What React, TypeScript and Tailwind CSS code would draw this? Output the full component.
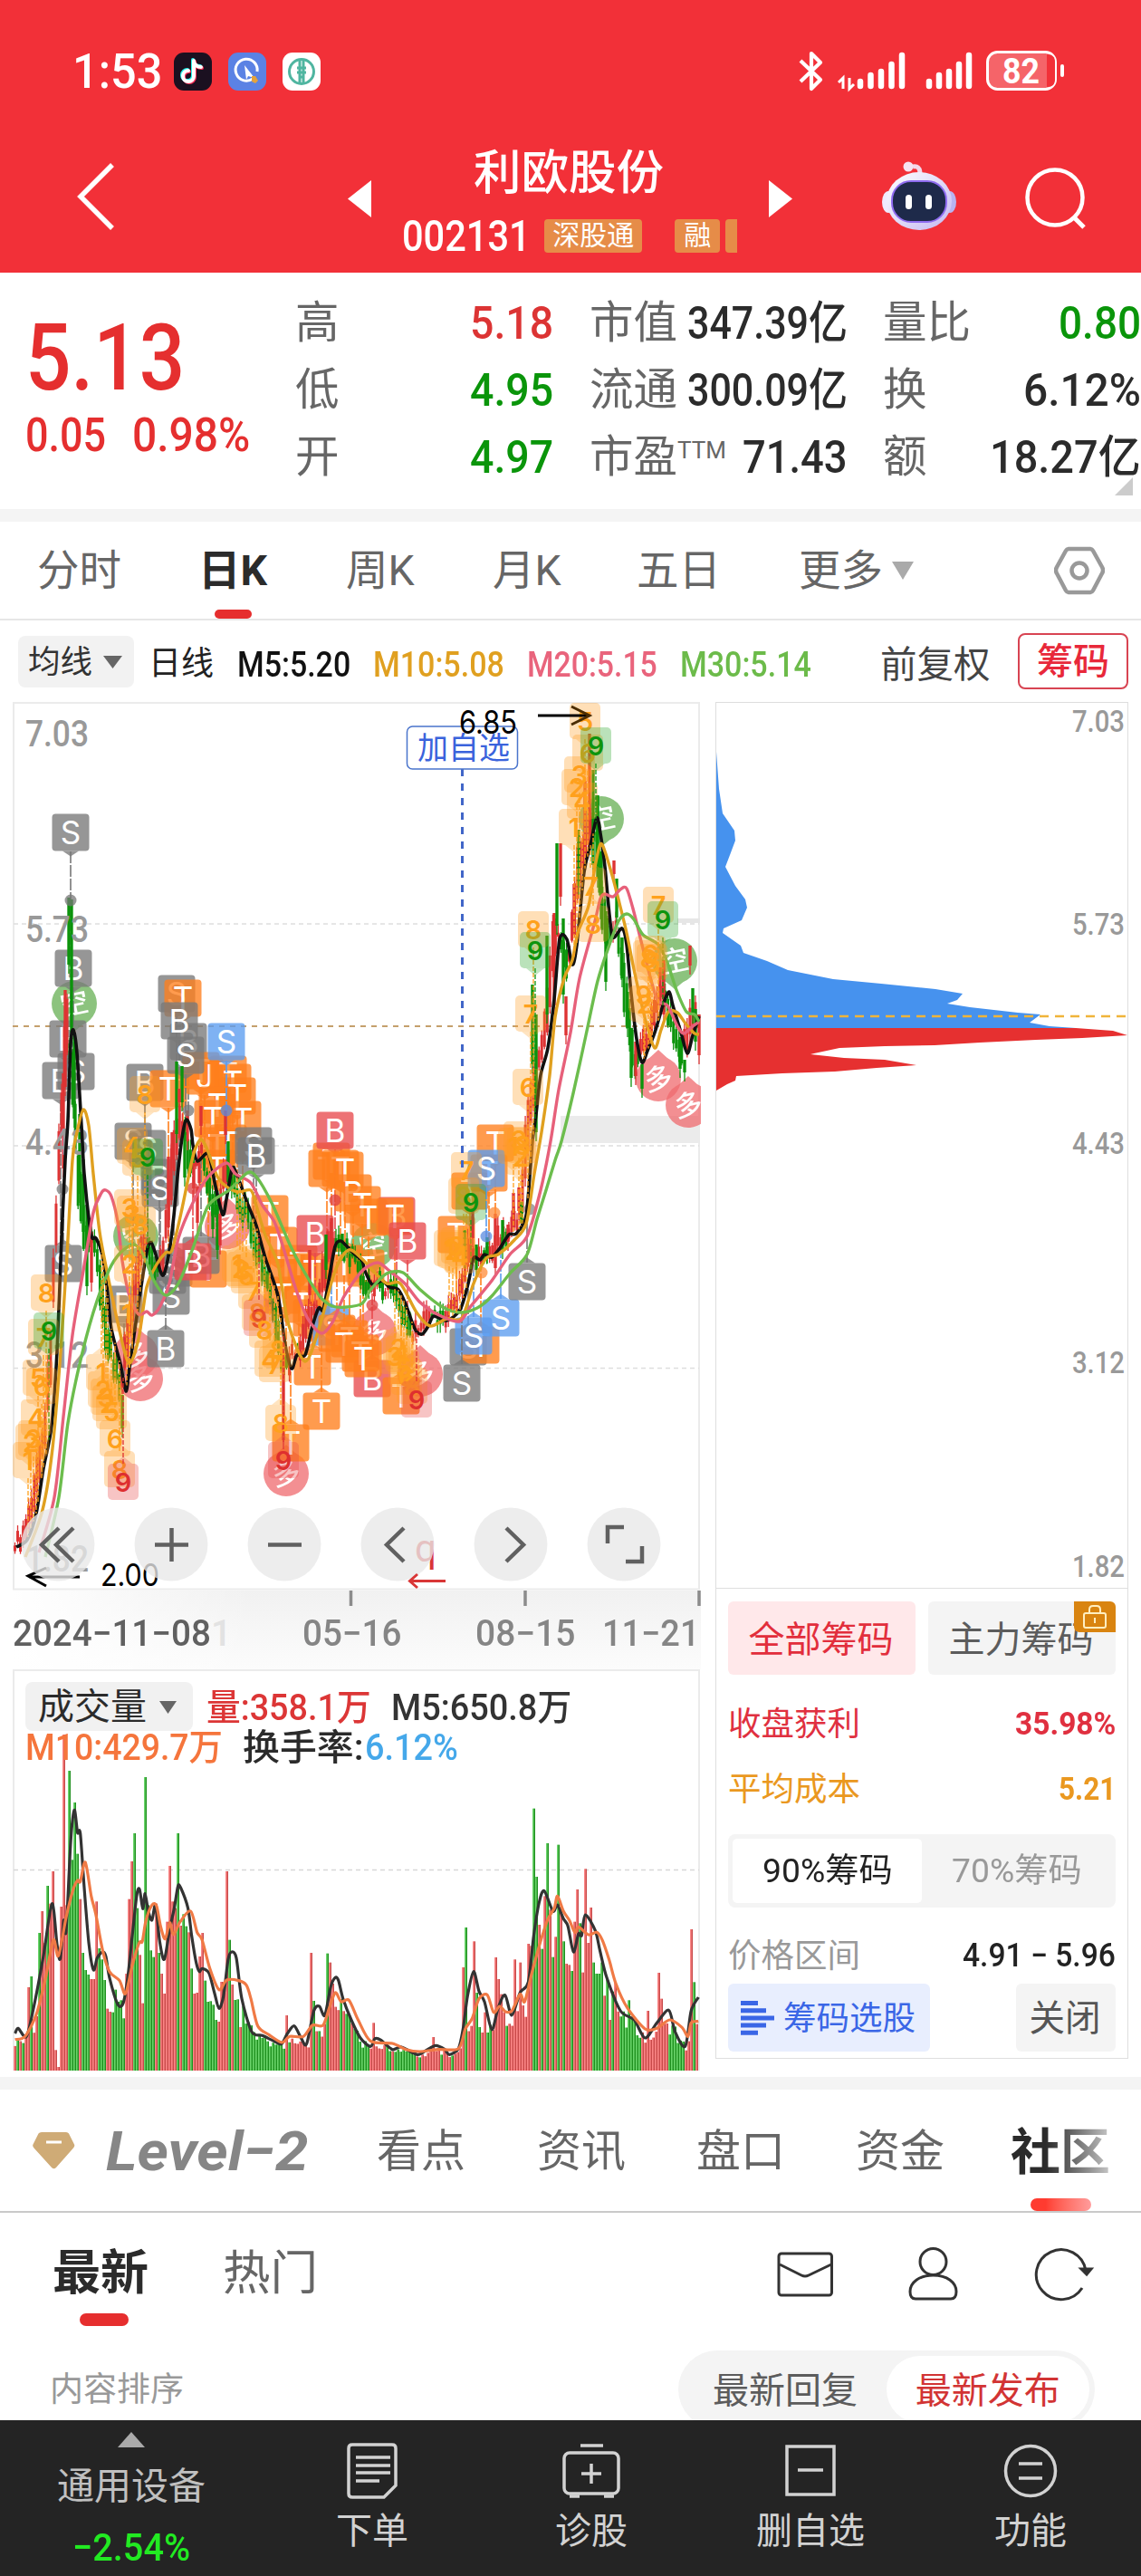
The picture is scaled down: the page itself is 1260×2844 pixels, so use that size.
import { useLayoutEffect, useRef, useState, type ReactNode } from "react";

type Pt = [number, number];
const pts = (s: string): Pt[] => s.trim().split(/\s+/).map((p) => p.split(",").map(Number) as Pt);

/* Text squeezed or stretched horizontally so that it fills its own box width. */
function Fit({ className = "", children }: { className?: string; children: ReactNode }) {
  const box = useRef<HTMLSpanElement>(null);
  const inner = useRef<HTMLSpanElement>(null);
  const [k, setK] = useState(1);
  useLayoutEffect(() => {
    if (box.current && inner.current && inner.current.offsetWidth) setK(box.current.offsetWidth / inner.current.offsetWidth);
  }, []);
  return (
    <span ref={box} className={"inline-block shrink-0 whitespace-nowrap text-left " + className}>
      <span ref={inner} className="inline-block origin-left" style={{ transform: `scaleX(${k})` }}>
        {children}
      </span>
    </span>
  );
}

function StatusBar() {
  return (
    <div className="flex h-[158px] items-center pl-[80px] text-white">
      <Fit className="w-[99px] pt-[2px] text-[53px] font-medium">1:53</Fit>
      <svg className="ml-[13px] h-[42px] w-[42px]" viewBox="0 0 42 42">
        <rect width="42" height="42" rx="11" fill="#1b1020" />
        <g fill="none" strokeWidth="4" strokeLinecap="round">
          <path d="M22 9v17a6 6 0 1 1-6-6M22 10c1 4 4 6 8 6" stroke="#25f4ee" transform="translate(-1,-1)" />
          <path d="M22 9v17a6 6 0 1 1-6-6M22 10c1 4 4 6 8 6" stroke="#fe2c55" transform="translate(1,1)" />
          <path d="M22 9v17a6 6 0 1 1-6-6M22 10c1 4 4 6 8 6" stroke="#fff" />
        </g>
      </svg>
      <svg className="ml-[18px] h-[42px] w-[42px]" viewBox="0 0 42 42">
        <rect width="42" height="42" rx="11" fill="#5b82e4" />
        <path d="M27 29a12 12 0 1 1 5-8" fill="none" stroke="#fff" strokeWidth="3" />
        <path d="M18 14l11 14-7-2-2 4z" fill="#fff" />
        <path d="M26 26l4 0 3 5-3 3-4-2z" fill="#e5a33c" />
      </svg>
      <svg className="ml-[18px] h-[42px] w-[42px]" viewBox="0 0 42 42">
        <rect width="42" height="42" rx="11" fill="#fff" />
        <circle cx="21" cy="21" r="13.5" fill="none" stroke="#4fb5a0" strokeWidth="3" />
        <path d="M19 7v27M23 7v27M16 17h10M16 22h10M18 27h6" stroke="#4fb5a0" strokeWidth="3" fill="none" />
      </svg>
      <svg className="ml-[528px] h-[46px] w-[296px]" viewBox="882 56 296 46">
        <g fill="none" stroke="#fff" strokeWidth="4.2" strokeLinejoin="round">
          <path d="M884 67l22 21-10 10V59l10 10-22 21" />
        </g>
        <g stroke="#fff" strokeLinecap="round" strokeWidth="6.5">
          <path d="M950 90v5M961.500 83v12M973 79v16M984.500 71v24M996 61v34" />
          <path d="M1026 90v5M1037 83v12M1048 79v16M1059 71v24M1070 61v34" />
        </g>
        <path d="M926 91l5-5v12M938 86v12l5-5" fill="none" stroke="#fff" strokeWidth="3" />
        <rect x="1090.500" y="57.500" width="75" height="41" rx="11" fill="#f56469" stroke="#fff" strokeWidth="3" />
        <path d="M1157 60h-1v36h1c5 0 8-3 8-8V68c0-5-3-8-8-8z" fill="#f23038" />
        <rect x="1171" y="71" width="4" height="14" rx="2" fill="#fff" />
        <text x="1107" y="92" fontSize="38" fontWeight="700" fill="#fff" textLength="41" lengthAdjust="spacingAndGlyphs">82</text>
      </svg>
    </div>
  );
}

function NavBar() {
  return (
    <div className="flex h-[143px] text-white">
      <svg className="ml-[84px] mt-[22px] h-[74px] w-[44px]" viewBox="0 0 44 74">
        <path d="M40 2L5 37l35 35" fill="none" stroke="#fff" strokeWidth="5.500" />
      </svg>
      <svg className="ml-[256px] mt-[41px] h-[41px] w-[26px]" viewBox="0 0 26 41"><path d="M26 0v41L0 20.500z" fill="#fff" /></svg>
      <div className="ml-[36px] flex w-[368px] flex-col">
        <div className="h-[63px] pl-[77px] pt-[3px] text-[52.500px] font-medium leading-[60px]">利欧股份</div>
        <div className="mt-[13px] flex h-[52px] items-center">
          <Fit className="-ml-[2px] w-[142px] pt-[2px] text-[48px] font-medium leading-[52px]">002131</Fit>
          <span className="ml-[15px] flex h-[37px] w-[109px] items-center justify-center rounded-[4px] bg-[#e68c48] text-[30px]">深股通</span>
          <span className="ml-[36px] flex h-[37px] w-[50px] items-center justify-center rounded-[4px] bg-[#e68c48] text-[30px]">融</span>
          <span className="ml-[6px] h-[37px] w-[13px] rounded-l-[4px] bg-[#e68c48]" />
        </div>
      </div>
      <svg className="ml-[35px] mt-[41px] h-[41px] w-[26px]" viewBox="0 0 26 41"><path d="M0 0v41l26-20.500z" fill="#fff" /></svg>
      <svg className="ml-[98px] mt-[20px] h-[78px] w-[84px]" viewBox="0 0 84 78">
        <defs>
          <linearGradient id="shell" x1="0" y1="0" x2="1" y2="1"><stop offset="0" stopColor="#fff" /><stop offset="1" stopColor="#c4b9f2" /></linearGradient>
        </defs>
        <path d="M43 14c0-7-3-9-8-8" fill="none" stroke="#f3d9ea" strokeWidth="5" />
        <circle cx="30" cy="6" r="5.500" fill="#f6e3f2" />
        <ellipse cx="8" cy="45" rx="7" ry="12" fill="#efeafe" />
        <ellipse cx="76" cy="45" rx="7" ry="12" fill="#b8b4f0" />
        <ellipse cx="42" cy="44" rx="36" ry="32" fill="url(#shell)" />
        <rect x="12" y="22" width="60" height="45" rx="21" fill="#1e2a4a" stroke="#8f6cf0" strokeWidth="2" />
        <rect x="27" y="37" width="7" height="16" rx="3.500" fill="#fff" />
        <rect x="49" y="37" width="7" height="16" rx="3.500" fill="#fff" />
      </svg>
      <svg className="ml-[74px] mt-[27px] h-[70px] w-[70px]" viewBox="0 0 70 70">
        <circle cx="34" cy="33" r="30.500" fill="none" stroke="#fff" strokeWidth="4.500" />
        <path d="M55 55l11 11" stroke="#fff" strokeWidth="5" />
      </svg>
    </div>
  );
}

function Stat({ label, tone, children }: { label: ReactNode; tone: string; children: ReactNode }) {
  return (
    <div className="flex h-[74px] items-center justify-between pt-[6px]">
      <span className="whitespace-nowrap text-[48.500px] text-[#666]">{label}</span>
      <span className={"text-[50px] font-medium " + tone}>{children}</span>
    </div>
  );
}

function Quote() {
  return (
    <div className="relative flex h-[261px] bg-white pt-[16px]">
      <div className="ml-[28px] w-[298px] text-[#e52f2f]">
        <Fit className="mt-[26px] h-[104px] w-[176px] text-[102px] font-medium leading-[104px]">5.13</Fit>
        <div className="mt-[4px] flex text-[52px] font-medium leading-[60px]">
          <Fit className="w-[89px]">0.05</Fit>
          <Fit className="ml-[29px] w-[130px]">0.98%</Fit>
        </div>
      </div>
      <div className="w-[285px]">
        <Stat label="高" tone="text-[#dc3434]"><Fit className="w-[92px]">5.18</Fit></Stat>
        <Stat label="低" tone="text-[#0a950a]"><Fit className="w-[92px]">4.95</Fit></Stat>
        <Stat label="开" tone="text-[#0a950a]"><Fit className="w-[92px]">4.97</Fit></Stat>
      </div>
      <div className="ml-[40px] w-[285px]">
        <Stat label="市值" tone="text-[#2b2b2b]"><Fit className="w-[177px]">347.39亿</Fit></Stat>
        <Stat label="流通" tone="text-[#2b2b2b]"><Fit className="w-[177px]">300.09亿</Fit></Stat>
        <Stat label={<>市盈<span className="relative -top-[15px] text-[26px]">TTM</span></>} tone="text-[#2b2b2b]"><Fit className="w-[116px]">71.43</Fit></Stat>
      </div>
      <div className="ml-[39px] w-[285px]">
        <Stat label="量比" tone="text-[#0a950a]"><Fit className="w-[91px]">0.80</Fit></Stat>
        <Stat label="换" tone="text-[#2b2b2b]"><Fit className="w-[130px]">6.12%</Fit></Stat>
        <Stat label="额" tone="text-[#2b2b2b]"><Fit className="w-[167px]">18.27亿</Fit></Stat>
      </div>
      <svg className="absolute right-[9px] top-[226px] h-[20px] w-[20px]" viewBox="0 0 20 20"><path d="M20 0v20H0z" fill="#ccc" /></svg>
    </div>
  );
}

const Down = ({ className }: { className: string }) => (
  <svg className={className} viewBox="0 0 20 14" preserveAspectRatio="none"><path d="M0 0h20L10 14z" fill="currentColor" /></svg>
);

function PeriodTabs() {
  return (
    <div className="flex h-[109px] items-center border-b-2 border-[#e6e6e6] pl-[41px] text-[46.500px] text-[#666]">
      <span className="w-[178px] pt-[3px]">分时</span>
      <span className="relative flex h-full w-[163px] items-center pt-[3px] font-bold text-[#2b2b2b]">
        日K
        <span className="absolute bottom-0 left-[18px] h-[10px] w-[41px] rounded-[5px] bg-[#e62e2e]" />
      </span>
      <span className="w-[162px] pt-[3px]">周K</span>
      <span className="w-[159px] pt-[3px]">月K</span>
      <span className="w-[179px] pt-[3px]">五日</span>
      <span className="w-[103px] pt-[3px]">更多</span>
      <Down className="h-[20px] w-[24px] text-[#aaa]" />
      <svg className="ml-[155px] h-[54px] w-[56px]" viewBox="0 0 56 54">
        <path d="M16 3h24a4 4 0 0 1 3 2l10 18a7 7 0 0 1 0 7L43 49a4 4 0 0 1-3 2H16a4 4 0 0 1-3-2L3 30a7 7 0 0 1 0-7L13 5a4 4 0 0 1 3-2z" fill="none" stroke="#999" strokeWidth="4.500" />
        <circle cx="28" cy="27" r="8.500" fill="none" stroke="#999" strokeWidth="4.500" />
      </svg>
    </div>
  );
}

function AverageRow() {
  return (
    <div className="flex h-[90px] items-center pl-[20px] text-[38px]">
      <div className="flex h-[57px] w-[128px] items-center rounded-[8px] bg-[#f2f2f2] pl-[11px] pt-[2px] text-[35.500px] text-[#333]">
        均线<Down className="ml-[12px] h-[14px] w-[21px] text-[#666]" />
      </div>
      <span className="ml-[16px] w-[98px] pt-[8px] text-[36px] text-[#222]">日线</span>
      <div className="flex h-full items-center pt-[9px] font-medium">
        <Fit className="w-[125px] text-[#111]">M5:5.20</Fit>
        <Fit className="ml-[25px] w-[145px] text-[#e0a020]">M10:5.08</Fit>
        <Fit className="ml-[25px] w-[144px] text-[#e9647c]">M20:5.15</Fit>
        <Fit className="ml-[25px] w-[145px] text-[#6cbb4a]">M30:5.14</Fit>
      </div>
      <span className="ml-[76px] w-[123px] pt-[8px] text-[40.500px] text-[#444]">前复权</span>
      <span className="ml-[29px] flex h-[62px] w-[122px] items-center justify-center rounded-[8px] border-2 border-[#d84452] pt-[2px] text-[40px] font-medium text-[#e8283a]">筹码</span>
    </div>
  );
}

const MA5 = pts(`18,1708 30,1700 40,1671 48,1621 57,1574 63,1492 68,1367 72,1281 75,1237 78,1153 81,1137 85,1163 90,1243 93,1296 99,1353 102,1367 106,1367 113,1385 118,1421 123,1467 133,1506 139,1536 143,1510 148,1474 157,1413 163,1378 167,1372 172,1385 177,1403 181,1407 187,1381 192,1342 197,1289 202,1250 206,1236 211,1247 213,1264 218,1282 230,1274 238,1310 246,1341 250,1324 255,1296 258,1289 265,1306 273,1328 283,1353 293,1389 307,1431 315,1485 322,1511 328,1496 337,1496 345,1464 352,1444 357,1446 363,1414 370,1376 376,1370 383,1376 392,1385 400,1392 403,1403 411,1418 422,1414 430,1421 440,1424 448,1440 458,1467 466,1473 473,1464 479,1453 493,1458 508,1446 517,1417 523,1389 530,1391 535,1385 543,1388 552,1378 562,1363 570,1362 580,1346 583,1324 588,1260 592,1230 597,1187 605,1157 612,1103 618,1037 626,1037 632,1065 637,1043 645,963 652,933 659,903 663,920 668,957 673,1010 677,1035 687,1025 692,1043 697,1097 703,1147 709,1173 715,1160 723,1140 733,1107 739,1095 743,1110 752,1140 759,1163 765,1143 772,1122`);
const MA10 = pts(`28,1719 47,1667 58,1599 67,1492 74,1385 80,1281 85,1250 92,1225 98,1243 103,1296 110,1360 118,1403 130,1460 142,1505 153,1478 162,1421 173,1396 183,1383 190,1380 200,1339 212,1281 217,1265 222,1258 228,1267 240,1299 250,1310 263,1316 277,1314 283,1331 293,1364 307,1396 318,1460 337,1503 353,1464 370,1403 385,1380 400,1390 410,1401 427,1417 442,1417 460,1449 475,1464 493,1456 510,1455 523,1417 537,1389 550,1385 568,1369 581,1351 590,1296 598,1250 607,1187 613,1123 623,1080 632,1060 638,1030 650,1000 657,957 663,932 668,940 677,970 683,993 692,1030 700,1070 713,1127 723,1157 730,1137 738,1117 748,1118 757,1130 767,1141 772,1142`);
const MA20 = pts(`43,1714 60,1653 70,1564 80,1474 92,1403 103,1339 112,1317 117,1314 123,1321 130,1349 135,1392 143,1431 153,1451 162,1448 168,1452 177,1442 187,1417 197,1367 213,1328 230,1299 250,1284 260,1296 277,1306 290,1331 303,1349 313,1378 327,1424 340,1456 355,1472 367,1460 380,1431 400,1403 417,1394 430,1403 447,1417 463,1437 483,1451 507,1459 520,1442 543,1414 563,1385 582,1365 597,1314 608,1260 617,1203 630,1140 640,1080 657,1017 663,992 668,987 677,990 685,982 692,981 700,1007 710,1047 725,1102 737,1110 748,1133 755,1141 765,1133 772,1128`);
const MA30 = pts(`50,1719 65,1653 75,1571 87,1510 103,1449 120,1403 133,1383 148,1374 158,1385 170,1414 183,1430 197,1417 213,1378 230,1331 253,1314 273,1295 283,1299 300,1328 320,1374 333,1399 353,1431 367,1442 383,1443 400,1439 410,1423 427,1406 445,1405 463,1423 487,1442 507,1449 527,1444 543,1431 563,1406 582,1385 593,1346 603,1314 613,1281 620,1260 633,1207 647,1143 660,1083 673,1043 683,1017 692,1009 700,1015 710,1032 727,1043 737,1063 747,1093 758,1117 767,1120 772,1128`);

function at(line: Pt[], x: number) {
  if (x <= line[0][0]) return line[0][1];
  for (let i = 1; i < line.length; i++) {
    const [x0, y0] = line[i - 1];
    const [x1, y1] = line[i];
    if (x <= x1) return y0 + ((y1 - y0) * (x - x0)) / (x1 - x0 || 1);
  }
  return line[line.length - 1][1];
}
const rnd = (i: number, k: number) => {
  const v = Math.sin(i * 127.1 + k * 311.7) * 43758.5453;
  return v - Math.floor(v);
};
/* Smooth curve through the points (Catmull-Rom converted to Bezier). */
function curve(p: Pt[]) {
  let d = `M${p[0][0]} ${p[0][1]}`;
  for (let i = 0; i < p.length - 1; i++) {
    const a = p[i - 1] ?? p[i], b = p[i], c = p[i + 1], e = p[i + 2] ?? c;
    d += `C${b[0] + (c[0] - a[0]) / 7} ${b[1] + (c[1] - a[1]) / 7} ${c[0] - (e[0] - b[0]) / 7} ${c[1] - (e[1] - b[1]) / 7} ${c[0]} ${c[1]}`;
  }
  return d;
}

const RED = "#de3434";
const GREEN = "#0c940c";
const candles = Array.from({ length: 250 }, (_, i) => {
  const x = 16.5 + i * 3.03;
  const now = at(MA5, x + 7), prev = at(MA5, x + 2);
  const slope = now - prev;
  const mid = now + (rnd(i, 1) - 0.5) * 16;
  const half = 3 + rnd(i, 2) * 7 + Math.min(Math.abs(slope) * 0.45, 22);
  const up = slope + (rnd(i, 3) - 0.5) * 10 < 0;
  const wick = rnd(i, 4) * 9;
  return { x, top: mid - half, bottom: mid + half, hi: mid - half - wick, lo: mid + half + wick * rnd(i, 5), color: up ? RED : GREEN };
});
/* Sessions whose range is far outside of the average: x, top, bottom, colour. */
const bars: [number, number, number, string][] = [
  [76, 991, 1065, GREEN], [79, 993, 1140, GREEN], [72, 1093, 1200, RED], [82, 1140, 1235, GREEN], [70, 1185, 1290, RED], [88, 1230, 1318, GREEN], [92, 1280, 1360, GREEN], [96, 1330, 1420, GREEN], [101, 1360, 1416, RED],
  [195, 1172, 1252, GREEN], [201, 1177, 1217, GREEN], [198, 1202, 1217, RED], [207, 1226, 1260, RED], [222, 1221, 1243, RED], [249, 1226, 1253, RED], [204, 1250, 1300, GREEN], [186, 1277, 1355, RED], [190, 1250, 1280, RED], [214, 1284, 1312, RED], [220, 1285, 1306, RED], [218, 1310, 1350, RED], [235, 1330, 1357, GREEN], [240, 1330, 1380, GREEN], [243, 1340, 1375, RED], [252, 1260, 1305, GREEN], [135, 1540, 1577, GREEN],
  [313, 1500, 1590, RED], [342, 1380, 1430, RED], [366, 1345, 1405, RED], [360, 1363, 1402, GREEN], [378, 1362, 1382, GREEN],
  [513, 1358, 1390, GREEN], [522, 1336, 1367, RED], [526, 1374, 1402, GREEN], [538, 1366, 1385, GREEN], [547, 1340, 1400, RED], [555, 1347, 1380, GREEN], [561, 1352, 1371, RED], [567, 1317, 1345, RED], [573, 1311, 1337, RED], [576, 1327, 1350, GREEN],
  [588, 1087, 1175, GREEN], [592, 1120, 1250, GREEN], [604, 1033, 1120, GREEN], [612, 1008, 1110, RED], [615, 931, 1022, GREEN], [619, 931, 990, RED], [622, 1014, 1098, GREEN], [625, 1100, 1143, RED],
  [639, 916, 978, GREEN], [634, 976, 1020, RED], [646, 862, 940, RED], [651, 810, 920, RED], [655, 850, 955, GREEN], [660, 878, 970, GREEN], [664, 940, 1015, GREEN], [669, 1006, 1084, GREEN], [678, 950, 965, RED], [681, 970, 1013, GREEN],
  [687, 1035, 1080, GREEN], [693, 1095, 1135, GREEN], [697, 1135, 1190, GREEN], [702, 1150, 1188, RED], [709, 1175, 1202, GREEN], [733, 1060, 1120, RED], [729, 1068, 1110, RED], [751, 1145, 1180, GREEN], [756, 1170, 1184, GREEN], [762, 1044, 1066, RED], [765, 1091, 1120, GREEN], [768, 1114, 1150, GREEN], [772, 1120, 1165, RED],
];

type Mark = [string, number, number, string];
const marks = (s: string): Mark[] => s.trim().split(/\s+/).map((m) => { const [t, x, y, c] = m.split(","); return [t, +x, +y, c]; });
/* letter, centre x, centre y, colour key (g grey, o orange, r red, b blue) */
const flags = marks(`S,78,919,g B,81,1069,g B,75,1147,g B,67,1193,g S,84,1183,g S,195,1097,g T,202,1102,o B,208,1150,g B,198,1127,g
B,160,1195,g T,186,1202,o T,222,1182,o J,226,1188,o T,252,1186,o T,257,1195,o T,262,1210,o T,268,1236,o T,240,1220,o T,235,1235,o T,240,1265,o T,252,1262,o T,240,1290,o
S,205,1165,g S,250,1150,b S,147,1260,g S,163,1268,g B,176,1300,g S,177,1312,g S,280,1265,g B,283,1276,g S,70,1395,g B,137,1440,g
S,192,1400,g S,185,1408,g S,189,1431,g B,183,1489,g T,230,1401,o B,222,1386,g B,213,1393,r
T,298,1340,o T,308,1375,o T,316,1400,o T,312,1430,o T,330,1395,o T,334,1440,o T,345,1404,o T,344,1455,o T,361,1290,o T,366,1282,o B,370,1248,r T,376,1290,o T,381,1292,o B,390,1317,o B,348,1362,r T,345,1509,o T,355,1558,o T,321,1593,o
S,366,1465,b T,372,1472,o T,386,1478,o T,380,1484,o T,380,1395,o T,400,1330,o T,407,1344,o T,404,1400,o B,438,1342,r T,436,1343,o B,450,1370,r B,411,1522,r T,398,1494,o T,401,1500,o T,443,1541,o
T,519,1315,o T,504,1363,o T,547,1262,o T,540,1295,o S,537,1290,b S,517,1487,g T,531,1485,o S,523,1475,b S,553,1455,b S,510,1527,g S,582,1415,g`);
/* digit badges (o orange count, g green nine, r red nine) */
const counts = marks(`8,51,1427,o 7,48,1476,o 9,54,1469,g 5,42,1521,o 6,46,1530,o 4,40,1565,o 3,37,1588,o 2,34,1592,o 1,31,1612,o
8,160,1208,o 4,146,1265,o 5,152,1278,o 9,163,1277,g 3,143,1333,o 3,146,1340,o 8,155,1352,o 2,143,1395,o 1,140,1450,o
1,112,1515,o 2,114,1534,o 3,117,1542,o 2,119,1549,o 5,123,1558,o 6,127,1588,o 8,132,1622,o 9,136,1636,r
1,262,1395,o 2,265,1400,o 3,268,1402,o 5,272,1408,o 7,280,1425,o 8,284,1449,o 9,286,1455,r 8,292,1468,o 4,298,1500,o 7,303,1506,o 8,307,1490,o 8,310,1571,o 9,313,1612,r
2,440,1488,o 3,436,1497,o 4,443,1495,o 5,446,1510,o 6,449,1520,o 8,455,1530,o 9,460,1545,r
7,515,1292,o 8,512,1320,o 9,520,1327,g 1,496,1378,o 2,500,1380,o 3,504,1375,o 4,508,1386,o
1,567,1265,o 3,573,1258,o 8,577,1264,o 2,575,1277,o 6,583,1200,o 7,586,1119,o 8,589,1026,o 9,591,1049,g
1,634,913,o 4,643,884,o 2,637,869,o 3,640,855,o 6,649,831,o 5,646,796,o 9,658,823,g 7,652,978,o 8,655,1020,o
7,727,999,o 9,732,1015,g 6,718,1053,o 8,716,1058,o 5,720,1062,o 9,711,1098,o 2,712,1108,o`);
const rounds = marks(`空,82,1108,g 空,150,1365,g 空,412,1375,g 空,664,904,g 空,745,1061,g 多,155,1522,p 多,150,1496,p 多,251,1354,p 多,316,1627,p 多,413,1472,p 多,464,1517,p 多,727,1191,p 多,760,1220,p`);
const flagFill: Record<string, string> = { g: "#787878", o: "#ff7f1c", r: "#e84a4e", b: "#5b9cef" };
const countFill: Record<string, [string, string]> = { o: ["#ff9d1e", "#ffa11c"], g: ["#28a428", "#0d940d"], r: ["#e64848", "#de2f2f"] };

function Badge({ t, x, y, c }: { t: string; x: number; y: number; c: string }) {
  const up = y < at(MA5, x);
  return (
    <g>
      <path d={`M${x} ${up ? y + 21 : y - 21}V${at(MA5, x)}`} stroke={c} strokeWidth="2" strokeDasharray="13 2" opacity=".8" />
      <rect x={x - 20.5} y={y - 20.5} width="41" height="41" rx="4" fill={c} opacity=".78" />
      <path d={up ? `M${x - 9} ${y + 20.5}h18l-9 6z` : `M${x - 9} ${y - 20.5}h18l-9-6z`} fill={c} opacity=".78" />
      <text x={x} y={y + 12.5} fontSize="35" fill="#fff" textAnchor="middle">{t}</text>
    </g>
  );
}

function AxisLabel({ x, y, w, size, children }: { x: number; y: number; w: number; size: number; children: string }) {
  return <text x={x} y={y} fontSize={size} fontWeight="500" fill="#999" textLength={w} lengthAdjust="spacingAndGlyphs">{children}</text>;
}

function PriceChart() {
  return (
    <svg className="block h-[981px] w-[760px]" viewBox="14 775 760 981">
      <rect x="15" y="776" width="757" height="978.500" fill="#fff" stroke="#ebebeb" strokeWidth="2" />
      <rect x="619" y="1232" width="154" height="30" fill="#ebebeb" />
      <rect x="748" y="1014" width="25" height="5" fill="#e6e6e6" />
      <path d="M15 1020H772M15 1265H772M15 1510.500H772" stroke="#dedede" strokeWidth="1.500" strokeDasharray="5 4" />
      <path d="M14 1133H772" stroke="#c4a06c" strokeWidth="2" strokeDasharray="6 6" />
      <g fontFamily='"Noto Sans CJK SC"' fontWeight="500">
        {rounds.map(([t, x, y, c], i) => (
          <g key={i} opacity=".75">
            <circle cx={x} cy={y} r="25" fill={c === "g" ? "#66b054" : "#f06a6e"} />
            <path d={c === "g" ? `M${x - 12} ${y + 21}l12 10 12-10z` : `M${x - 12} ${y - 21}l12-11 12 11z`} fill={c === "g" ? "#66b054" : "#f06a6e"} />
            <text x={x} y={y + 11} fontSize="31" fill="#fff" textAnchor="middle" transform={`rotate(-12 ${x} ${y})`}>{t}</text>
          </g>
        ))}
      </g>
      <g fontFamily="Inter">{flags.map(([t, x, y, c], i) => <Badge key={i} t={t} x={x} y={y} c={flagFill[c]} />)}</g>
      <g>
        {candles.map((c, i) => (
          <g key={i} stroke={c.color}>
            <path d={`M${c.x} ${c.hi}V${c.lo}`} strokeWidth="1.300" />
            <path d={`M${c.x} ${c.top + 2}V${c.bottom - 2}`} strokeWidth="3" />
          </g>
        ))}
        {bars.map(([x, a, b, c], i) => (
          <g key={i} stroke={c}>
            <path d={`M${x} ${a}V${b}`} strokeWidth="3.400" />
            <path d={`M${x} ${a}V${b + 10}`} strokeWidth="1.300" />
          </g>
        ))}
      </g>
      <AxisLabel x={28} y={824} w={70} size={40}>7.03</AxisLabel>
      <AxisLabel x={28} y={1040} w={70} size={40}>5.73</AxisLabel>
      <AxisLabel x={28} y={1275} w={70} size={40}>4.43</AxisLabel>
      <AxisLabel x={28} y={1510} w={70} size={40}>3.12</AxisLabel>
      <AxisLabel x={28} y={1735} w={70} size={40}>1.82</AxisLabel>
      <g opacity=".75">
        <circle cx="78" cy="994" r="6.500" fill="#777" /><circle cx="69" cy="1313" r="6.500" fill="#777" /><circle cx="208" cy="1226" r="6.500" fill="#777" />
        <circle cx="250" cy="1226" r="6.500" fill="#5b8ce0" /><circle cx="537" cy="1365" r="6.500" fill="#5b8ce0" /><circle cx="370" cy="1325" r="6.500" fill="#e04040" /><circle cx="213" cy="1312" r="6.500" fill="#e04040" />
        <circle cx="411" cy="1441" r="6.500" fill="#e04040" /><circle cx="546" cy="1339" r="6.500" fill="#ff8c38" /><circle cx="532" cy="1405" r="6.500" fill="#ff8c38" /><circle cx="585" cy="1335" r="6.500" fill="#888" />
      </g>
      <g fill="none" strokeWidth="3.400" strokeLinejoin="round">
        <path d={curve(MA5)} stroke="#111" strokeWidth="3.600" />
        <path d={curve(MA10)} stroke="#e0a01f" />
        <path d={curve(MA20)} stroke="#e7607a" />
        <path d={curve(MA30)} stroke="#6cbd4d" />
      </g>
      <g fontFamily="Inter" fontWeight="600">
        {counts.map(([t, x, y, c], i) => {
          const [fill, ink] = countFill[c];
          const up = y < at(MA5, x);
          return (
            <g key={i}>
              <path d={`M${x} ${up ? y + 20 : y - 20}V${at(MA5, x)}`} stroke={ink} strokeDasharray="5 2" strokeWidth="1.300" />
              <path d={up ? `M${x - 10} ${y + 20}h20l-10 8z` : `M${x - 10} ${y - 20}h20l-10-8z`} fill={fill} opacity=".28" />
              <rect x={x - 17} y={y - 20} width="34" height="40" rx="5" fill={fill} opacity=".32" />
              <text x={x} y={y + 11} fontSize="29" fill={ink} textAnchor="middle">{t}</text>
            </g>
          );
        })}
      </g>
      <path d="M510.500 849V1290" stroke="#4166c8" strokeWidth="3" strokeDasharray="8 8" />
      <rect x="449.500" y="802" width="122" height="47" rx="6" fill="none" stroke="#4a74cc" strokeWidth="1.500" />
      <text x="461" y="838" fontSize="34" fill="#3a63dc">加自选</text>
      <text x="507" y="810" fontSize="35" fontFamily="Inter" fill="#000" textLength="64" lengthAdjust="spacingAndGlyphs">6.85</text>
      <path d="M594 790H650" stroke="#000" strokeWidth="3" /><path d="M631 780l20 10-20 10" stroke="#4a2c00" strokeWidth="3" fill="none" />
      <text x="111" y="1751" fontSize="34" fontFamily="Inter" fill="#000" textLength="65" lengthAdjust="spacingAndGlyphs">2.00</text>
      <path d="M88 1741H32M51 1731l-20 9 20 11" stroke="#000" strokeWidth="3" fill="none" />
      <text x="458" y="1724" fontSize="42" fill="#d93636">q</text>
      <g fill="#e9e9e9" opacity=".78">
        {[64, 189, 314, 439, 564, 689].map((x) => <circle key={x} cx={x} cy="1705" r="40.500" />)}
      </g>
      <g fill="none" stroke="#606060" strokeWidth="4.500">
        <path d="M65 1687l-19 18.500 19 18.500M81 1687l-19 18.500 19 18.500" />
        <path d="M171 1705.500h37M189.500 1687v37M296 1705.500h37" />
        <path d="M446 1687l-19 18.500 19 18.500M559 1687l19 18.500-19 18.500" />
        <path d="M671 1704v-18h18M691 1724h18v-17" />
      </g>
      <path d="M492 1745.500H453M461 1738l-8.500 7.500 8.500 7.500" stroke="#d93636" strokeWidth="3" fill="none" />
    </svg>
  );
}

function Dates() {
  return (
    <div className="relative h-[87px] bg-linear-to-b from-[#f1f1f1] to-[#fcfcfc]">
      <div className="absolute inset-0 bg-linear-to-r from-white to-transparent to-35%" />
      <svg className="absolute inset-x-0 top-0 h-[17px] w-[760px]" viewBox="14 0 760 17"><path d="M387.500 0v17M580 0v17M772 0v17" stroke="#8c8c8c" strokeWidth="3.500" /></svg>
      <div className="relative flex h-full items-center pt-[8px] text-[40px] font-medium text-[#858585]">
        <Fit className="w-[219px] text-[#606060]">2024−11−08</Fit>
        <span className="w-[101px] text-[#e2e2e2]">1</span>
        <Fit className="w-[109px]">05−16</Fit>
        <Fit className="ml-[82px] w-[110px]">08−15</Fit>
        <Fit className="ml-[30px] w-[107px]">11−21</Fit>
      </div>
    </div>
  );
}

const vx = (p: Pt): Pt => [p[0] / 1.985, 1820 + p[1] / 3];
const V5 = pts(`33,1275 40,1258 58,1285 75,1180 95,1020 114,845 125,980 132,1028 140,900 145,935 155,640 163,535 170,610 176,612 185,800 195,980 205,1065 213,1025 225,1005 232,1020 240,1090 258,1178 270,1175 280,1090 290,950 300,815 306,798 313,862 318,812 325,870 333,900 341,850 350,970 360,1030 372,930 382,860 390,788 396,792 412,860 420,950 430,1040 437,1070 443,1060 458,1075 470,1140 480,1192 490,1150 500,1030 508,1005 518,1025 530,1160 552,1270 575,1282 600,1300 617,1310 630,1275 645,1250 660,1290 672,1310 688,1200 700,1185 712,1215 725,1120 735,1090 742,1100 752,1160 770,1230 790,1290 812,1318 822,1292 835,1297 860,1328 880,1320 915,1345 935,1330 955,1315 975,1328 985,1345 1005,1325 1015,1260 1025,1150 1038,1070 1050,1135 1062,1170 1078,1262 1092,1190 1107,1148 1122,1215 1140,1140 1158,1105 1170,950 1182,840 1193,803 1212,870 1222,850 1235,895 1245,920 1257,1005 1268,945 1275,950 1283,882 1305,935 1315,1000 1330,1090 1360,1200 1390,1230 1414,1290 1440,1240 1466,1198 1480,1270 1502,1318 1515,1200 1531,1155`).map(vx);
const V10 = pts(`33,1295 55,1285 80,1210 100,1090 117,965 128,1018 145,890 160,800 170,768 176,772 187,708 200,820 210,880 225,1000 240,1070 262,1100 275,1143 290,1050 305,975 312,970 320,900 333,850 343,852 352,920 362,962 372,908 380,948 395,905 418,870 432,940 443,965 460,1060 480,1130 497,1098 523,1100 540,1115 550,1160 565,1250 590,1280 618,1305 635,1285 665,1285 685,1248 708,1248 722,1190 735,1140 748,1170 765,1165 785,1230 812,1300 860,1308 890,1328 920,1335 960,1328 1005,1325 1020,1260 1035,1225 1050,1160 1068,1147 1082,1205 1095,1185 1108,1203 1122,1200 1140,1145 1150,1170 1165,1080 1182,985 1200,900 1215,860 1222,820 1235,870 1248,900 1260,940 1268,922 1290,948 1308,940 1320,965 1335,1030 1350,1110 1375,1190 1414,1260 1440,1258 1468,1230 1495,1255 1508,1285 1515,1240 1531,1235`).map(vx);
const peaks = marks(`r,61,1122,r g,66,1086,g g,84,942,g r,90,870,r r,96,975,r g,102,786,g r,108,845,r r,114,738,r r,120,1330,r r,126,1386,r r,132,855,r r,138,285,r r,144,850,r g,150,405,g g,156,700,g g,162,510,g g,168,680,g r,174,830,r g,180,1008,g g,186,1065,g g,192,1080,g r,198,1095,r r,203,1095,r r,208,838,r g,215,993,g g,220,1030,g g,226,1098,g r,232,1193,r r,238,1203,r g,244,1205,g g,250,1130,g g,256,1170,g g,262,1165,g g,268,1225,g r,275,1077,r r,281,830,r r,287,705,r g,293,612,g g,299,860,g r,305,1015,r r,311,1175,r g,317,426,g g,323,850,g g,329,1000,g g,335,1022,g r,341,845,r g,347,1008,g r,352,1077,r r,358,1143,r r,364,905,r r,370,720,r r,376,838,r r,382,860,r g,388,612,g r,394,918,r g,400,880,g g,406,920,g r,412,940,r g,418,1060,g r,424,1143,r r,430,1140,r r,436,1020,r r,442,942,r g,448,1100,g g,454,1170,g g,460,1168,g g,466,1180,g g,472,1230,g r,478,1236,r r,484,1104,r r,490,1104,r r,495,738,r g,501,965,g r,508,1113,r g,514,1164,g g,520,1162,g r,526,1254,r r,626,1215,r r,680,1008,r g,686,1167,g g,716,1010,g r,722,1040,r r,728,1110,r r,818,1240,r r,948,1287,r r,1013,1056,r g,1019,924,g r,1037,970,r g,1043,1140,g g,1049,1254,g r,1055,1272,r r,1061,1205,r g,1067,1272,g r,1085,1023,r r,1091,1095,r r,1097,1145,r r,1126,1030,r r,1138,1040,r r,1150,1220,r r,1156,978,r r,1162,985,r g,1168,530,g g,1174,756,g r,1180,915,r g,1186,995,g r,1192,820,r g,1198,645,g r,1204,865,r g,1210,1022,g r,1216,955,r g,1222,650,g r,1228,860,r g,1234,970,g r,1240,1044,r r,1246,1048,r g,1251,1068,g r,1257,905,r r,1263,798,r g,1269,910,g r,1275,1073,r r,1281,730,r r,1287,975,r r,1293,858,r g,1299,1040,g g,1305,1077,g g,1311,1077,g g,1317,1040,g r,1323,1150,r g,1329,1095,g r,1335,1230,r r,1345,1105,r g,1376,1165,g r,1418,1200,r r,1442,1074,r r,1448,1160,r r,1513,930,r g,1519,1105,g`);
const volumes = Array.from({ length: 252 }, (_, i) => {
  const x = 15 + i * 3;
  const h = (2286 - Math.max(at(V5, x), at(V10, x))) * (0.72 + rnd(i, 7) * 0.3);
  const slope = at(MA5, x + 6) - at(MA5, x);
  let top = 2286 - h;
  let red = slope + (rnd(i, 8) - 0.5) * 22 < 0;
  for (const [t, px, py] of peaks) {
    if (Math.abs(px / 1.985 - 1 - x) <= 1.5) { top = 1820 + py / 3; red = t === "r"; }
  }
  return { x, top, red };
});

function VolumePanel() {
  return (
    <div className="relative h-[444px]">
      <svg className="absolute inset-0 h-[444px] w-[760px]" viewBox="14 1843 760 444">
        <path d="M15 2286V1844H772V2286" fill="none" stroke="#ebebeb" strokeWidth="2" />
        <path d="M15 2064.500H772" stroke="#d8d8d8" strokeWidth="1.500" strokeDasharray="5 4" />
        {volumes.map((v) => (
          <g key={v.x}>
            <rect x={v.x} y={v.top} width="2" height={2286 - v.top} fill={v.red ? "#fb8686" : "#6ad46a"} />
            <rect x={v.x + 1.6} y={v.top} width="1.400" height={2286 - v.top} fill={v.red ? "#c84a4a" : "#1f901f"} />
          </g>
        ))}
        <g fill="none" strokeWidth="3.200" strokeLinejoin="round">
          <path d={curve(V5)} stroke="#333" />
          <path d={curve(V10)} stroke="#f07a45" />
        </g>
      </svg>
      <div className="relative flex h-[54px] translate-y-[14px] items-center pl-[14px] text-[40px]">
        <div className="flex h-[54px] w-[185px] items-center rounded-[8px] bg-[#f1f1f1] pl-[14px] pt-[2px] text-[#2b2b2b]">
          <span className="w-[121px]">成交量</span><Down className="ml-[13px] h-[14px] w-[19px] text-[#666]" />
        </div>
        <Fit className="ml-[15px] w-[182px] pt-[3px] font-medium text-[#dc3636]">量:358.1万</Fit>
        <Fit className="ml-[22px] w-[199px] pt-[3px] font-medium text-[#333]">M5:650.8万</Fit>
      </div>
      <div className="relative flex h-[40px] translate-y-[13px] items-center pl-[14px] text-[40px] font-medium">
        <Fit className="w-[218px] text-[#f5753c]">M10:429.7万</Fit>
        <Fit className="ml-[22px] w-[134px] text-[#2b2b2b]">换手率:</Fit>
        <Fit className="ml-px w-[103px] text-[#45a8ea]">6.12%</Fit>
      </div>
    </div>
  );
}

function ChipChart() {
  return (
    <svg className="block h-[977px] w-[454px]" viewBox="791 777 454 977">
      <path d="M791 831L794 872 798 899 811 918 812 929 806 945 801 958 812 979 823 994 825 1003 819 1017 799 1026 798 1031 818 1045 821 1053 847 1062 870 1072 920 1082 973 1087 1033 1093 1063 1098 1057 1105 1046 1109 1071 1113 1124 1119 1149 1121 1137 1130 1159 1134 1188 1136H791z" fill="#4692ee" />
      <path d="M791 1136H1188L1229 1139 1245 1144 1195 1147 1144 1149 1082 1152 1032 1155 977 1156 927 1158 899 1164 895 1165 932 1169 977 1171 1012 1177 968 1180 922 1184 864 1186 813 1189 812 1194 803 1198 791 1205z" fill="#e63030" />
      <path d="M791 1123H1245" stroke="#f0b43a" strokeWidth="2.500" strokeDasharray="10 7" />
      <AxisLabel x={1184} y={809} w={58} size={33}>7.03</AxisLabel>
      <AxisLabel x={1184} y={1033} w={58} size={33}>5.73</AxisLabel>
      <AxisLabel x={1184} y={1275} w={58} size={33}>4.43</AxisLabel>
      <AxisLabel x={1184} y={1517} w={58} size={33}>3.12</AxisLabel>
      <AxisLabel x={1184} y={1742} w={58} size={33}>1.82</AxisLabel>
    </svg>
  );
}

function ChipPanel() {
  return (
    <div className="ml-[16px] h-[1498px] w-[456px] border border-[#dedede]">
      <ChipChart />
      <div className="border-t border-[#dedede] px-[13px] pt-[14px]">
        <div className="flex justify-between text-[40px]">
          <span className="flex h-[81px] w-[207px] items-center justify-center rounded-[6px] bg-[#ffe8ea] pt-[4px] pr-[2px] text-[#e22e3c]">全部筹码</span>
          <span className="relative flex h-[81px] w-[207px] items-center justify-center rounded-[6px] bg-[#f4f4f4] pt-[4px] pr-[2px] text-[#5c5c5c]">
            主力筹码
            <span className="absolute right-0 top-0 flex h-[34px] w-[46px] items-center justify-center rounded-tr-[6px] rounded-bl-[6px] bg-[#d98410]">
              <svg className="h-[26px] w-[26px]" viewBox="0 0 26 26" fill="none" stroke="#ffeec0" strokeWidth="2"><rect x="1" y="9" width="24" height="16" rx="2" /><path d="M7 9V5c0-3 2-4 4-4h4c2 0 4 1 4 4v4M13 14v6" /></svg>
            </span>
          </span>
        </div>
        <div className="mt-[19px] flex h-[72px] items-center justify-between text-[36.500px] text-[#e03040]"><span>收盘获利</span><Fit className="w-[111px] text-[35px] font-bold">35.98%</Fit></div>
        <div className="flex h-[72px] items-center justify-between text-[36.500px] text-[#ea9820]"><span>平均成本</span><Fit className="w-[63px] text-[35px] font-bold">5.21</Fit></div>
        <div className="mt-[13px] flex h-[81px] rounded-[8px] bg-[#f4f4f4] p-[5px] text-[37px]">
          <span className="flex w-[209px] items-center justify-center rounded-[5px] bg-white pt-[2px] text-[#222]"><Fit className="w-[144px]">90%筹码</Fit></span>
          <span className="flex w-[209px] items-center justify-center pt-[2px] text-[#999]"><Fit className="w-[144px]">70%筹码</Fit></span>
        </div>
        <div className="mt-[24px] flex h-[60px] items-center justify-between text-[36.500px] text-[#999]"><span>价格区间</span><Fit className="w-[169px] text-[36px] font-medium text-[#222]">4.91 − 5.96</Fit></div>
        <div className="flex justify-between">
          <span className="flex h-[75px] w-[223px] items-center rounded-[6px] bg-[#e8eefe] pl-[14px] pt-[2px] text-[36.500px] text-[#3a66e6]">
            <svg className="-mt-[2px] mr-[10px] h-[38px] w-[37px]" viewBox="0 0 37 38" stroke="#3a66e6" strokeWidth="5"><path d="M0 2.500h19M0 10.700h28M0 19h37M0 27h28M0 35.300h19" /></svg>
            筹码选股
          </span>
          <span className="flex h-[75px] w-[110px] items-center justify-center rounded-[6px] bg-[#f4f4f4] pr-[2px] pt-[2px] text-[39.500px] text-[#555]">关闭</span>
        </div>
      </div>
    </div>
  );
}

function SectionTabs() {
  return (
    <div className="flex h-[136px] items-center border-b-2 border-[#c9c9c9] text-[49px] text-[#666]">
      <svg className="ml-[36px] h-[44px] w-[47px]" viewBox="0 0 47 44">
        <path d="M10 2h27q2 0 3 1.500l6 12q1 2-1 4L26 41q-2.500 2.500-5 0L1.500 19.500q-2-2-1-4l6-12Q7.500 2 10 2z" fill="#cfab76" />
        <path d="M15 13h17" stroke="#fff" strokeWidth="3" />
      </svg>
      <Fit className="ml-[34px] w-[224px] pt-[3px] text-[61px] font-bold italic text-[#868686]">Level−2</Fit>
      <span className="ml-[75px] w-[177px] pt-[5px]">看点</span>
      <span className="w-[176px] pt-[5px]">资讯</span>
      <span className="w-[176px] pt-[5px]">盘口</span>
      <span className="w-[171px] pt-[5px]">资金</span>
      <span className="relative flex h-full w-[112px] items-center pt-[4px]">
        <span className="bg-linear-to-r from-[#2b2b2b] from-35% to-[#c8c8c8] bg-clip-text text-[55px] font-bold text-transparent">社区</span>
        <span className="absolute bottom-0 left-[22px] h-[14px] w-[67px] rounded-[7px] bg-linear-to-r from-[#ff3b30] from-25% to-[#ff9c9c]" />
      </span>
    </div>
  );
}

function FeedHeader() {
  return (
    <div className="h-[229px] overflow-hidden">
      <div className="flex h-[125px] pl-[58px]">
        <div className="relative h-full w-[188px] pt-[27px] text-[53px] font-bold leading-[80px] text-[#2b2b2b]">
          最新
          <span className="absolute bottom-0 left-[30px] h-[14px] w-[54px] rounded-[7px] bg-[#e62e2e]" />
        </div>
        <div className="w-[611px] pt-[27px] text-[52.500px] leading-[80px] text-[#666]">热门</div>
        <svg className="mt-[37px] h-[62px] w-[352px]" viewBox="857 2480 352 62" fill="none" stroke="#333" strokeWidth="3">
          <rect x="860" y="2488" width="58.500" height="46" rx="3" />
          <path d="M861 2500l24 12q4 2 8 0l25-12" />
          <circle cx="1030.500" cy="2497" r="14.500" />
          <path d="M1005 2530c0-10 10-18 25.500-18s25.500 8 25.500 18q0 8-6 8h-39q-6 0-6-8z" />
          <path d="M1195 2526a27.500 27.500 0 1 1 4-19" />
          <path d="M1194 2505l6 6 5-6z" fill="#333" />
        </svg>
      </div>
      <div className="mt-[27px] flex h-[86px] items-center pl-[55px]">
        <span className="w-[694px] pt-[2px] text-[37px] text-[#999]">内容排序</span>
        <div className="flex h-[86px] w-[460px] rounded-[43px] bg-[#f4f4f4] p-[6px] text-[40px]">
          <span className="flex w-[224px] items-center pl-[32px] pt-[3px] text-[#5c5c5c]">最新回复</span>
          <span className="flex w-[225px] items-center justify-center rounded-[37px] bg-white pt-[3px] text-[#d23434]">最新发布</span>
        </div>
      </div>
    </div>
  );
}

function BottomItem({ label, className, children }: { label: string; className: string; children: ReactNode }) {
  return (
    <div className={"flex flex-col items-center pt-[24px] " + className}>
      <svg className="h-[64px] w-[68px]" viewBox="0 0 68 64" fill="none" stroke="#d2d2d2" strokeWidth="3.500">{children}</svg>
      <span className="mt-[6px] whitespace-nowrap text-[40px] leading-[58px] text-[#d2d2d2]">{label}</span>
    </div>
  );
}

function BottomBar() {
  return (
    <div className="flex h-[172px] bg-[#242424]">
      <div className="flex w-[290px] flex-col items-center pt-[13px]">
        <svg className="h-[17px] w-[30px]" viewBox="0 0 30 17"><path d="M15 0l15 17H0z" fill="#aaa" /></svg>
        <span className="mt-[13px] text-[41px] leading-[60px] text-[#c0c0c0]">通用设备</span>
        <Fit className="mt-[7px] w-[130px] text-[43px] font-medium leading-[60px] text-[#22ea22]">−2.54%</Fit>
      </div>
      <BottomItem label="下单" className="w-[242px]">
        <path d="M12 3h44q4 0 4 4v41L47 61H12q-4 0-4-4V7q0-4 4-4zM16 17h38M16 26h38M16 34h38M16 43h26" />
      </BottomItem>
      <BottomItem label="诊股" className="w-[242px]">
        <rect x="4" y="12" width="60" height="45" rx="6" /><path d="M22 4h25M34 24v22M23 35h22M10 60h11M48 60h11" />
      </BottomItem>
      <BottomItem label="删自选" className="w-[242px]">
        <rect x="8" y="5" width="52" height="53" /><path d="M20 31h28" />
      </BottomItem>
      <BottomItem label="功能" className="w-[244px]">
        <circle cx="34" cy="32" r="27.500" /><path d="M21 24h26M21 40h26" />
      </BottomItem>
    </div>
  );
}

export default function App() {
  return (
    <div className='h-[2844px] w-[1260px] overflow-hidden bg-white font-[Roboto,"Noto_Sans_CJK_SC",sans-serif] leading-[1.2]'>
      <div className="h-[301px] bg-[#f23038]">
        <StatusBar />
        <NavBar />
      </div>
      <Quote />
      <div className="h-[14px] bg-[#f4f4f4]" />
      <PeriodTabs />
      <AverageRow />
      <div className="flex h-[1518px] pl-[14px]">
        <div className="w-[760px]">
          <PriceChart />
          <Dates />
          <VolumePanel />
        </div>
        <ChipPanel />
      </div>
      <div className="h-[14px] bg-[#f4f4f4]" />
      <SectionTabs />
      <FeedHeader />
      <BottomBar />
    </div>
  );
}
